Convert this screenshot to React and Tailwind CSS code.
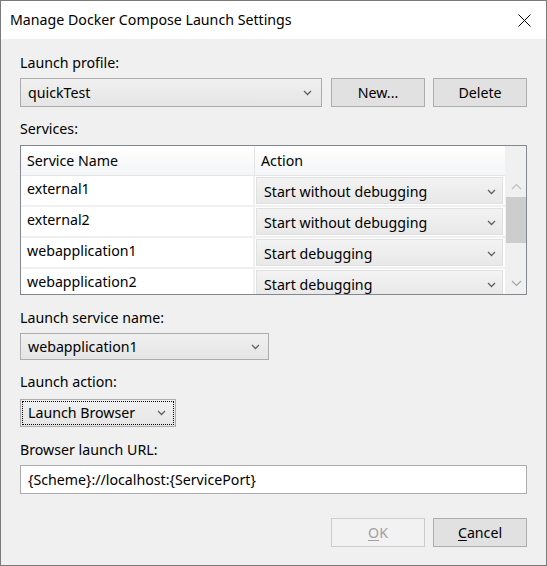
const Chevron = ({ color = '#606060' }) => (
  <svg width="9" height="6" viewBox="0 0 9 6" className="shrink-0">
    <path d="M1 1l3.5 3.5L8 1" stroke={color} strokeWidth="1.3" fill="none" />
  </svg>
);

const Combo = ({ value, className = '', chevronPad = 'pr-[9px]' }) => (
  <div
    className={`flex items-center justify-between border border-[#acacac] bg-linear-to-b from-[#f0f0f0] to-[#e5e5e5] pl-[7px] ${chevronPad} ${className}`}
  >
    <span>{value}</span>
    <Chevron />
  </div>
);

const Button = ({ children, disabled }) => (
  <div
    className={`flex h-[29px] w-[94px] items-center justify-center border ${
      disabled ? 'border-[#cccccc] bg-[#f2f2f2] text-[#a0a0a0]' : 'border-[#adadad] bg-[#e1e1e1]'
    }`}
  >
    {children}
  </div>
);

const rows = [
  ['external1', 'Start without debugging'],
  ['external2', 'Start without debugging'],
  ['webapplication1', 'Start debugging'],
  ['webapplication2', 'Start debugging'],
];

const Label = ({ children, className = '' }) => (
  <div className={`h-[20px] leading-[20px] ${className}`}>{children}</div>
);

export default function App() {
  return (
    <div
      className="flex h-[566px] w-[547px] flex-col border border-[#7a7a7a] text-[14.2px] text-black"
      style={{ fontFamily: '"Segoe UI", "Noto Sans", sans-serif' }}
    >
      {/* title bar */}
      <div className="flex h-[38px] shrink-0 items-center justify-between bg-white pl-[9px] pr-[15px]">
        <span>Manage Docker Compose Launch Settings</span>
        <svg width="13" height="13" viewBox="0 0 13 13">
          <path d="M0.5 0.5l12 12M12.5 0.5l-12 12" stroke="#000" strokeWidth="1" />
        </svg>
      </div>

      <div className="flex flex-1 flex-col bg-[#f0f0f0] px-[19px] pt-[14px]">
        <Label>Launch profile:</Label>
        <div className="mt-[5px] flex gap-[8px]">
          <Combo value="quickTest" className="h-[29px] w-[302px]" chevronPad="pr-[9px]" />
          <div className="ml-[1px] flex gap-[8px]">
            <Button>New...</Button>
            <Button>Delete</Button>
          </div>
        </div>

        <Label className="mt-[12px]">Services:</Label>
        <div className="mt-[6px] flex h-[150px] overflow-hidden border border-[#828790] bg-white">
          <div className="flex w-[484px] flex-col">
            <div className="flex h-[30px] shrink-0 border-b border-[#e5e5e5] bg-linear-to-b from-white to-[#f4f5f7]">
              <div className="flex w-[234px] items-center border-r border-[#e5e5e5] pl-[6px]">Service Name</div>
              <div className="flex flex-1 items-center pl-[6px]">Action</div>
            </div>
            {rows.map(([name, action]) => (
              <div key={name} className="flex h-[31px] shrink-0 border-b-2 border-[#f0f0f0]">
                <div className="flex w-[234px] items-start border-r-2 border-[#f0f0f0] pl-[6px] pt-[2px]">
                  {name}
                </div>
                <div className="flex flex-1 py-[1px] pl-[1px] pr-[2px]">
                  <div className="flex flex-1 items-center justify-between border border-[#e0e0e0] bg-linear-to-b from-[#f3f3f3] to-[#e8e8e8] pl-[7px] pr-[6px] pt-[2px]">
                    <span>{action}</span>
                    <Chevron />
                  </div>
                </div>
              </div>
            ))}
          </div>
          {/* scrollbar */}
          <div className="flex w-[21px] flex-col bg-[#f0f0f0] pl-[1px]">
            <div className="h-[30px]" />
            <div className="flex h-[21px] items-center justify-center">
              <svg width="11" height="7" viewBox="0 0 11 7">
                <path d="M1 6l4.5-4.5L10 6" stroke="#bfbfbf" strokeWidth="1.2" fill="none" />
              </svg>
            </div>
            <div className="h-[46px] bg-[#cdcdcd]" />
            <div className="flex-1" />
            <div className="flex h-[21px] items-center justify-center">
              <svg width="11" height="7" viewBox="0 0 11 7">
                <path d="M1 1l4.5 4.5L10 1" stroke="#a6a6a6" strokeWidth="1.2" fill="none" />
              </svg>
            </div>
          </div>
        </div>

        <Label className="mt-[13px]">Launch service name:</Label>
        <Combo value="webapplication1" className="mt-[5px] h-[27px] w-[249px]" chevronPad="pr-[8px]" />

        <Label className="mt-[12px]">Launch action:</Label>
        <Combo
          value="Launch Browser"
          className="mt-[7px] h-[28px] w-[156px] outline-1 outline-dotted outline-black -outline-offset-3"
          chevronPad="pr-[9px]"
        />

        <Label className="mt-[13px]">Browser launch URL:</Label>
        <div className="mt-[5px] flex h-[29px] items-center border border-[#acacac] bg-white pl-[7px]">
          {'{Scheme}://localhost:{ServicePort}'}
        </div>

        <div className="mt-[24px] flex justify-end gap-[8px]">
          <Button disabled>
            <span className="underline underline-offset-2">O</span>K
          </Button>
          <Button>
            <span>
              <span className="underline underline-offset-2">C</span>ancel
            </span>
          </Button>
        </div>
      </div>
    </div>
  );
}
